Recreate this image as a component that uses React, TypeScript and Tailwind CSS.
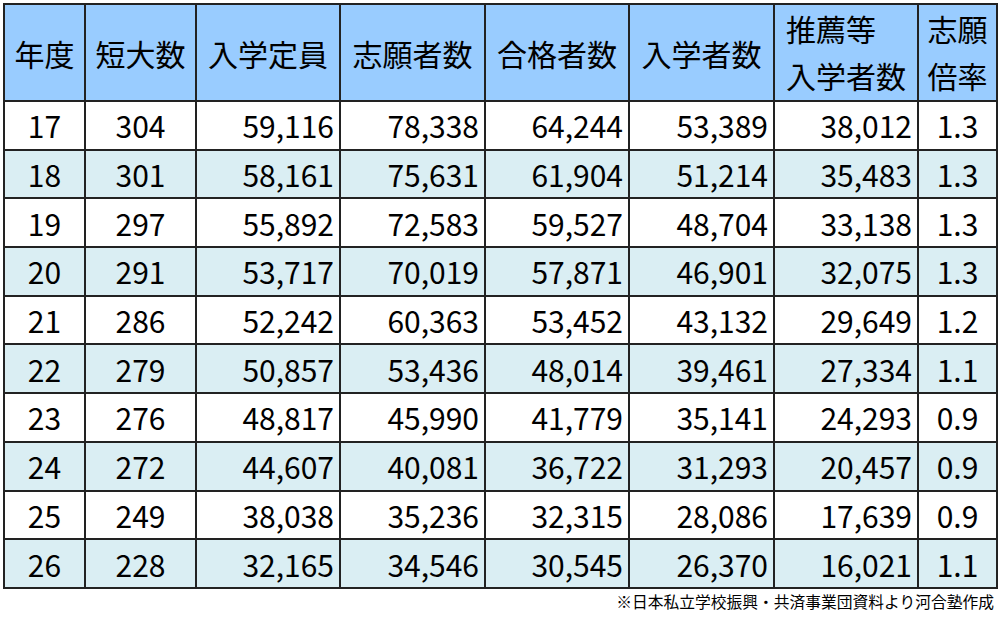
const rows: [string, string, string, string, string, string, string, string][] = [
  ['17', '304', '59,116', '78,338', '64,244', '53,389', '38,012', '1.3'],
  ['18', '301', '58,161', '75,631', '61,904', '51,214', '35,483', '1.3'],
  ['19', '297', '55,892', '72,583', '59,527', '48,704', '33,138', '1.3'],
  ['20', '291', '53,717', '70,019', '57,871', '46,901', '32,075', '1.3'],
  ['21', '286', '52,242', '60,363', '53,452', '43,132', '29,649', '1.2'],
  ['22', '279', '50,857', '53,436', '48,014', '39,461', '27,334', '1.1'],
  ['23', '276', '48,817', '45,990', '41,779', '35,141', '24,293', '0.9'],
  ['24', '272', '44,607', '40,081', '36,722', '31,293', '20,457', '0.9'],
  ['25', '249', '38,038', '35,236', '32,315', '28,086', '17,639', '0.9'],
  ['26', '228', '32,165', '34,546', '30,545', '26,370', '16,021', '1.1'],
];

const widths = ['w-[81px]', 'w-[111px]', 'w-[144px]', 'w-[145px]', 'w-[144px]', 'w-[145px]', 'w-[144px]', 'w-[79px]'];

const th = 'border-2 border-[#222] bg-[#99ccff] font-normal text-center align-middle p-0';
const td = 'border-2 border-[#222] p-0 align-middle';

export default function App() {
  return (
    <div
      className="w-[1000px] h-[618px] bg-white text-black pt-[3px] pl-[3px]"
      style={{fontFamily: '"Noto Sans CJK JP", "Noto Sans", sans-serif'}}
    >
      <table className="table-fixed border-collapse w-[993px] text-[30px] leading-none">
        <colgroup>
          {widths.map((w, i) => (
            <col key={i} className={w} />
          ))}
        </colgroup>
        <thead>
          <tr className="h-[97px]">
            <th className={th}>年度</th>
            <th className={th}>短大数</th>
            <th className={th}>入学定員</th>
            <th className={th}>志願者数</th>
            <th className={th}>合格者数</th>
            <th className={th}>入学者数</th>
            <th className={th}>
              <div className="inline-block text-left leading-[47px] -mt-[2px]">
                推薦等
                <br />
                入学者数
              </div>
            </th>
            <th className={th}>
              <div className="leading-[47px] -mt-[2px]">
                志願
                <br />
                倍率
              </div>
            </th>
          </tr>
        </thead>
        <tbody>
          {rows.map((r, i) => (
            <tr key={r[0]} className={`h-[48.7px] ${i % 2 === 1 ? 'bg-[#daeef3]' : 'bg-white'}`}>
              {r.map((v, j) => (
                <td
                  key={j}
                  className={`${td} ${j < 2 || j === 7 ? 'text-center' : 'text-right pr-[5px]'}`}
                >
                  {v}
                </td>
              ))}
            </tr>
          ))}
        </tbody>
      </table>
      <div className="text-right pr-[6px] mt-[2px] text-[15.75px] leading-[22px]">
        ※日本私立学校振興・共済事業団資料より河合塾作成
      </div>
    </div>
  );
}
